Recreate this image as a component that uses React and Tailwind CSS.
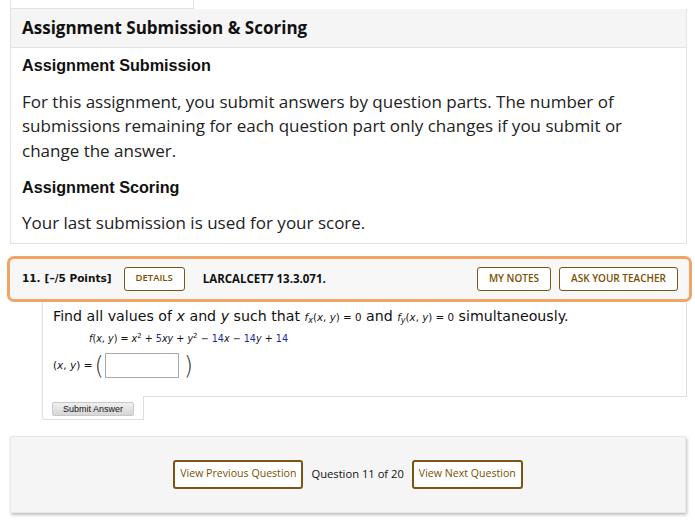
export default function App() {
  const brown = "text-[#7b5000] border-[#7b5416]";
  return (
    <div className="w-[695px] h-[521px] bg-white relative overflow-hidden">
      {/* top stub */}
      <div className="ml-[10px] w-[184px] h-[9px] border-r border-b border-l border-[#e3e3e3]" />
      {/* card */}
      <div className="ml-[10px] w-[677px] border border-t-0 border-[#e3e3e3]">
        <div className="h-[39px] bg-[#f5f5f5] border-b border-[#e3e3e3] flex items-center pl-[11px] font-['Open_Sans'] font-bold text-[17px] text-[#111]">
          Assignment Submission &amp; Scoring
        </div>
        <div className="pl-[11px] pr-[20px]">
          <div className="font-['Liberation_Sans'] font-bold text-[16.2px] text-[#111] leading-[20px] mt-[7px]">Assignment Submission</div>
          <p className="font-['Open_Sans'] text-[17px] leading-[24.5px] text-[#222] mt-[14.5px]">
            For this assignment, you submit answers by question parts. The number of submissions remaining for each question part only changes if you submit or change the answer.
          </p>
          <div className="font-['Liberation_Sans'] font-bold text-[16.2px] text-[#111] leading-[20px] mt-[14px]">Assignment Scoring</div>
          <p className="font-['Open_Sans'] text-[17px] leading-[24px] text-[#222] mt-[13.5px] pb-[8px]">
            Your last submission is used for your score.
          </p>
        </div>
      </div>

      {/* question header */}
      <div className="mt-[12px] ml-[7px] w-[685px] h-[46px] border-[3px] border-[#f2a466] rounded-[7px] bg-[#f7f7f7] flex items-center pl-[12px] pr-[11px]">
        <span className="font-['DejaVu_Sans'] font-bold text-[10.5px] text-[#111]">11.</span>
        <span className="font-['DejaVu_Sans'] font-bold text-[10.5px] text-[#111] ml-[4px]">[–/5 Points]</span>
        <button className={`ml-[12px] h-[24px] px-[11px] border rounded-[3px] bg-white font-['Open_Sans'] font-semibold text-[9.5px] ${brown}`}>DETAILS</button>
        <span className="ml-[18px] font-['Open_Sans'] font-bold text-[11.5px] text-[#111]">LARCALCET7 13.3.071.</span>
        <div className="flex-1" />
        <button className={`h-[24px] px-[11px] border rounded-[3px] bg-white font-['Open_Sans'] font-semibold text-[10px] ${brown}`}>MY NOTES</button>
        <button className={`ml-[8px] h-[24px] px-[11px] border rounded-[3px] bg-white font-['Open_Sans'] font-semibold text-[10px] ${brown}`}>ASK YOUR TEACHER</button>
      </div>

      {/* question body */}
      <div className="ml-[42px] w-[645px] border-l border-r border-[#dedede] pl-[10px] pt-[5px] pb-[17px] font-['DejaVu_Sans'] text-[#111]">
        <div className="text-[14.2px] leading-[18px] flex items-baseline whitespace-nowrap">
          <span>Find all values of <i>x</i> and <i>y</i> such that&nbsp;</span>
          <span className="text-[10.3px]"><i>f</i><sub className="text-[8px]"><i>x</i></sub>(<i>x</i>, <i>y</i>) = 0</span>
          <span>&nbsp;and&nbsp;</span>
          <span className="text-[10.3px]"><i>f</i><sub className="text-[8px]"><i>y</i></sub>(<i>x</i>, <i>y</i>) = 0</span>
          <span>&nbsp;simultaneously.</span>
        </div>
        <div className="ml-[36px] mt-[6px] text-[9.6px] leading-[14px] whitespace-nowrap">
          <i>f</i>(<i>x</i>, <i>y</i>) = <i>x</i><sup className="text-[7px]">2</sup> + <span className="text-[#2323a8]">5</span><i>xy</i> + <i>y</i><sup className="text-[7px]">2</sup> − <span className="text-[#2323a8]">14</span><i>x</i> − <span className="text-[#2323a8]">14</span><i>y</i> + <span className="text-[#2323a8]">14</span>
        </div>
        <div className="mt-[7px] flex items-center text-[10.5px]">
          <span>(<i>x</i>, <i>y</i>) =</span>
          <span className="ml-[2px] text-[24px] font-extralight leading-[26px] text-[#333]">(</span>
          <div className="ml-[1px] w-[74px] h-[25px] border border-[#aaa] bg-white" />
          <span className="ml-[5px] text-[24px] font-extralight leading-[26px] text-[#333]">)</span>
        </div>
      </div>
      <div className="ml-[42px] w-[645px] flex items-start">
        <div className="w-[102px] h-[24px] border-l border-r border-b border-[#dedede] rounded-bl-[3px] pl-[9px] pt-[6px] flex items-start">
          <button className="h-[14px] w-[82px] rounded-[2px] border border-[#c8c8c8] bg-gradient-to-b from-[#f0f0f0] to-[#d6d6d6] font-['Liberation_Sans'] text-[9px] leading-[12px] text-[#111]">Submit Answer</button>
        </div>
        <div className="flex-1 border-t border-[#dedede]" />
      </div>

      {/* footer nav */}
      <div className="mt-[16px] ml-[10px] w-[676px] h-[77px] bg-[#f5f5f5] border border-[#e8e8e8] shadow-[1px_2px_3px_rgba(0,0,0,0.25)] flex items-center justify-center gap-[8px] font-['Open_Sans']">
        <button className="h-[29px] px-[5px] border-2 border-[#7b5416] rounded-[3px] bg-white text-[#7b5000] text-[10.6px]">View Previous Question</button>
        <span className="text-[#111] text-[11.2px]">Question 11 of 20</span>
        <button className="h-[29px] px-[5px] border-2 border-[#7b5416] rounded-[3px] bg-white text-[#7b5000] text-[10.6px]">View Next Question</button>
      </div>
    </div>
  );
}
